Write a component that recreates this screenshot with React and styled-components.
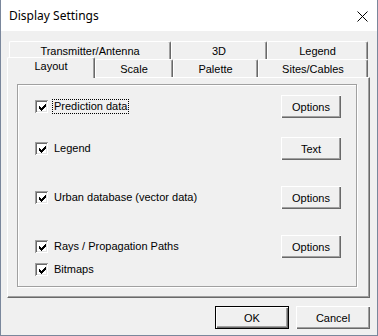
import React from "react";
import styled, { createGlobalStyle } from "styled-components";

const GlobalStyle = createGlobalStyle`
  body {
    margin: 0;
    background: #ffffff;
    font-family: "Liberation Sans", Arial, sans-serif;
  }
`;

const backTabs = [
  { label: "Transmitter/Antenna", width: 162 },
  { label: "3D", width: 96 },
  { label: "Legend", width: 101 },
];

const frontTabs = [
  { label: "Layout", width: 88, active: true },
  { label: "Scale", width: 78 },
  { label: "Palette", width: 85 },
  { label: "Sites/Cables", width: 110 },
];

const rows = [
  { label: "Prediction data", button: "Options", gap: 0, focused: true },
  { label: "Legend", button: "Text", gap: 19 },
  { label: "Urban database (vector data)", button: "Options", gap: 26 },
  { label: "Rays / Propagation Paths", button: "Options", gap: 26 },
  { label: "Bitmaps", gap: 0 },
];

function CheckMark() {
  return (
    <svg width="7" height="7" viewBox="0 0 7 7" shapeRendering="crispEdges">
      <path d="M0 2 L2 4 L7 -1 L7 2 L2 7 L0 5 Z" fill="#000" />
    </svg>
  );
}

function CloseIcon() {
  return (
    <svg width="11" height="11" viewBox="0 0 11 11">
      <path d="M0.5 0.5 L10.5 10.5 M10.5 0.5 L0.5 10.5" stroke="#000" strokeWidth="1" />
    </svg>
  );
}

export default function App() {
  return (
    <>
      <GlobalStyle />
      <Window>
        <TitleBar>
          <Title>Display Settings</Title>
          <CloseBtn>
            <CloseIcon />
          </CloseBtn>
        </TitleBar>
        <Body>
          <TabControl>
            <TabRow $back>
              {backTabs.map((t) => (
                <Tab key={t.label} style={{ width: t.width }}>
                  {t.label}
                </Tab>
              ))}
            </TabRow>
            <TabRow>
              {frontTabs.map((t) => (
                <Tab key={t.label} $active={t.active} style={{ width: t.width }}>
                  {t.label}
                </Tab>
              ))}
            </TabRow>
            <Panel>
              <GroupBox>
                {rows.map((r) => (
                  <Row key={r.label} $gap={r.gap}>
                    <CheckBox>
                      <CheckMark />
                    </CheckBox>
                    <Label $focused={r.focused}>{r.label}</Label>
                    {r.button && <Button $width={60}>{r.button}</Button>}
                  </Row>
                ))}
              </GroupBox>
            </Panel>
          </TabControl>
          <Footer>
            <Button $width={74} $default>
              OK
            </Button>
            <Button $width={74}>Cancel</Button>
          </Footer>
        </Body>
      </Window>
    </>
  );
}

const Window = styled.div`
  width: 378px;
  height: 336px;
  box-sizing: border-box;
  border: 1px solid #7a879c;
  border-top: none;
  background: #f0f0f0;
  display: flex;
  flex-direction: column;
`;

const TitleBar = styled.div`
  height: 31px;
  flex-shrink: 0;
  background: #ffffff;
  display: flex;
  align-items: center;
  justify-content: space-between;
  padding: 0 9px 0 8px;
`;

const Title = styled.span`
  font-family: "Noto Sans", "Open Sans", sans-serif;
  font-size: 12px;
  color: #000;
`;

const CloseBtn = styled.div`
  display: flex;
  align-items: center;
  padding-top: 1px;
`;

const Body = styled.div`
  flex: 1;
  padding: 10px 7px 0 6px;
  display: flex;
  flex-direction: column;
`;

const TabControl = styled.div`
  width: 363px;
  display: flex;
  flex-direction: column;
`;

const TabRow = styled.div`
  display: flex;
  height: 18px;
  padding: ${(p) => (p.$back ? "0 2px" : "0")};
  position: relative;
  z-index: ${(p) => (p.$back ? 0 : 1)};
`;

const Tab = styled.div`
  box-sizing: border-box;
  height: ${(p) => (p.$active ? "21px" : "18px")};
  margin-top: ${(p) => (p.$active ? "-2px" : "0")};
  padding-top: ${(p) => (p.$active ? "1px" : "2px")};
  background: #f0f0f0;
  border-top: 1px solid #ffffff;
  border-left: 1px solid #ffffff;
  border-right: 1px solid #696969;
  box-shadow: inset -1px 0 0 #a0a0a0;
  border-radius: 2px 2px 0 0;
  font-size: 11px;
  line-height: 14px;
  color: #000;
  text-align: center;
  position: relative;
  z-index: ${(p) => (p.$active ? 2 : 1)};
`;

const Panel = styled.div`
  height: 221px;
  box-sizing: border-box;
  border-top: 1px solid #ffffff;
  border-left: 1px solid #ffffff;
  border-right: 1px solid #696969;
  border-bottom: 1px solid #696969;
  box-shadow: inset -1px -1px 0 #a0a0a0;
  padding: 6px 0 0 9px;
`;

const GroupBox = styled.div`
  width: 340px;
  height: 203px;
  box-sizing: border-box;
  border: 1px solid #a0a0a0;
  box-shadow: inset 1px 1px 0 #ffffff, 1px 1px 0 #ffffff;
  padding: 10px 15px 0 17px;
  display: flex;
  flex-direction: column;
`;

const Row = styled.div`
  display: flex;
  align-items: center;
  height: 23px;
  margin-top: ${(p) => p.$gap}px;
`;

const CheckBox = styled.div`
  width: 13px;
  height: 13px;
  box-sizing: border-box;
  background: #ffffff;
  box-shadow: inset 1px 1px 0 #a0a0a0, inset -1px -1px 0 #ffffff,
    inset 2px 2px 0 #696969, inset -2px -2px 0 #e3e3e3;
  display: flex;
  align-items: center;
  justify-content: center;
  padding: 1px 0 0 1px;
  flex-shrink: 0;
`;

const Label = styled.span`
  margin-left: 4px;
  margin-right: auto;
  padding: 0 1px;
  font-size: 11px;
  line-height: 13px;
  color: #000;
  border: 1px dotted ${(p) => (p.$focused ? "#000" : "transparent")};
  white-space: nowrap;
`;

const Button = styled.div`
  width: ${(p) => p.$width}px;
  height: 23px;
  box-sizing: border-box;
  background: #f0f0f0;
  border: ${(p) => (p.$default ? "1px solid #000" : "none")};
  box-shadow: inset 1px 1px 0 #ffffff, inset -1px -1px 0 #696969,
    inset -2px -2px 0 #a0a0a0;
  display: flex;
  align-items: center;
  justify-content: center;
  font-size: 11px;
  color: #000;
  flex-shrink: 0;
`;

const Footer = styled.div`
  display: flex;
  justify-content: flex-end;
  gap: 7px;
  margin-top: 8px;
`;
